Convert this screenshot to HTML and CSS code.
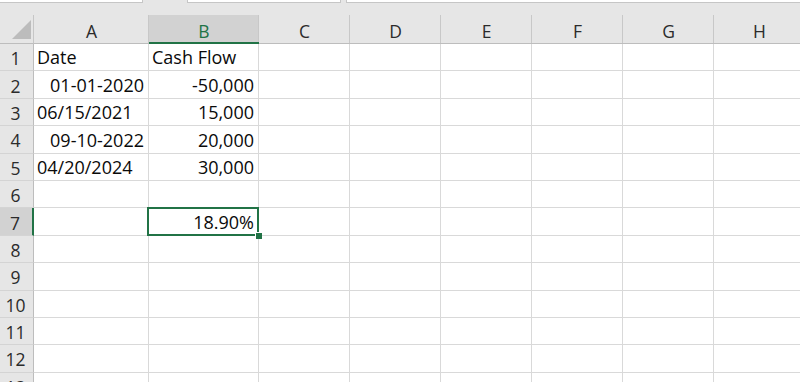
FILE: index.html
```html
<!DOCTYPE html>
<html lang="en">
<head>
    <meta charset="UTF-8">
    <meta name="viewport" content="width=device-width, initial-scale=1.0">
    <title>IRR Sheet</title>
    <link rel="stylesheet" href="styles.css">
</head>
<body>
    <div class="ribbon-edge">
        <div class="box name-box"></div>
        <div class="box fx-box"></div>
        <div class="box formula-box"></div>
    </div>
    <div class="sheet" id="sheet"></div>

    <script>
        const sheet = document.getElementById('sheet');
        const columns = ['A', 'B', 'C', 'D', 'E', 'F', 'G', 'H'];
        const selected = { row: 7, col: 'B' };

        // r = right aligned (numbers and real dates)
        const data = {
            1: { A: { t: 'Date' }, B: { t: 'Cash Flow' } },
            2: { A: { t: '01-01-2020', r: true }, B: { t: '-50,000', r: true } },
            3: { A: { t: '06/15/2021' }, B: { t: '15,000', r: true } },
            4: { A: { t: '09-10-2022', r: true }, B: { t: '20,000', r: true } },
            5: { A: { t: '04/20/2024' }, B: { t: '30,000', r: true } },
            7: { B: { t: '18.90%', r: true } }
        };

        let html = '<div class="corner"><span class="corner-mark"></span></div>';
        columns.forEach(col => {
            const active = col === selected.col ? ' active' : '';
            html += `<div class="col-head${active}">${col}</div>`;
        });

        for (let row = 1; row <= 13; row++) {
            const active = row === selected.row ? ' active' : '';
            html += `<div class="row-head${active}">${row}</div>`;
            columns.forEach(col => {
                const cell = (data[row] || {})[col];
                let cls = 'cell';
                if (cell && cell.r) cls += ' num';
                if (row === selected.row && col === selected.col) cls += ' selected';
                html += `<div class="${cls}">${cell ? cell.t : ''}</div>`;
            });
        }
        sheet.innerHTML = html;
    </script>
</body>
</html>
```

FILE: styles.css
```css
body {
    margin: 0;
    width: 800px;
    height: 382px;
    overflow: hidden;
    background: #e6e6e6;
    font-family: "Open Sans", "Noto Sans", sans-serif;
}
.ribbon-edge {
    display: flex;
    height: 15px;
    background: #e6e6e6;
}
.box {
    height: 2px;
    background: #ffffff;
    border: 1px solid #c6c6c6;
    border-top: none;
}
.name-box {
    width: 142px;
    border-left: none;
}
.fx-box {
    width: 152px;
    margin-left: 44px;
}
.formula-box {
    flex: 1;
    margin-left: 5px;
    border-right: none;
}
.sheet {
    display: grid;
    grid-template-columns: 34px 115px 110px repeat(6, 91px);
    grid-template-rows: 29px repeat(13, 27.4px);
    width: 805px;
    background: #ffffff;
}
.corner {
    position: relative;
    background: #e6e6e6;
    border-right: 1px solid #c6c6c6;
    border-bottom: 1px solid #bdbdbd;
}
.corner-mark {
    position: absolute;
    left: 12px;
    top: 5px;
    width: 0;
    height: 0;
    border-left: 19px solid transparent;
    border-bottom: 19px solid #bcbcbc;
}
.col-head {
    display: flex;
    justify-content: center;
    align-items: center;
    padding-top: 4px;
    background: #e6e6e6;
    color: #2b2b2b;
    font-size: 17.5px;
    border-bottom: 1px solid #bdbdbd;
    box-shadow: inset -1px 0 0 #c8c8c8;
    box-sizing: border-box;
}
.col-head.active {
    background: #d2d2d2;
    color: #217346;
    border-bottom: 2px solid #217346;
}
.row-head {
    display: flex;
    justify-content: center;
    align-items: center;
    padding: 2px 2px 0 0;
    background: #e6e6e6;
    color: #2b2b2b;
    font-size: 17.5px;
    border-right: 1px solid #bdbdbd;
    border-bottom: 1px solid #d4d4d4;
    box-sizing: border-box;
}
.row-head.active {
    background: #d2d2d2;
    border-right: 2px solid #217346;
}
.cell {
    display: flex;
    align-items: flex-end;
    padding: 0 4px 1px 3px;
    color: #0a0a0a;
    font-size: 18px;
    line-height: 24px;
    white-space: nowrap;
    border-right: 1px solid #d9d9d9;
    border-bottom: 1px solid #d9d9d9;
    box-sizing: border-box;
}
.cell.num {
    justify-content: flex-end;
}
.cell.selected {
    position: relative;
}
.cell.selected::before {
    content: "";
    position: absolute;
    left: -2px;
    top: -1px;
    right: -1px;
    bottom: -1px;
    border: 2px solid #217346;
}
.cell.selected::after {
    content: "";
    position: absolute;
    right: -4px;
    bottom: -4px;
    width: 6px;
    height: 6px;
    background: #217346;
    border: 1px solid #ffffff;
    border-right: none;
    border-bottom: none;
}
```
